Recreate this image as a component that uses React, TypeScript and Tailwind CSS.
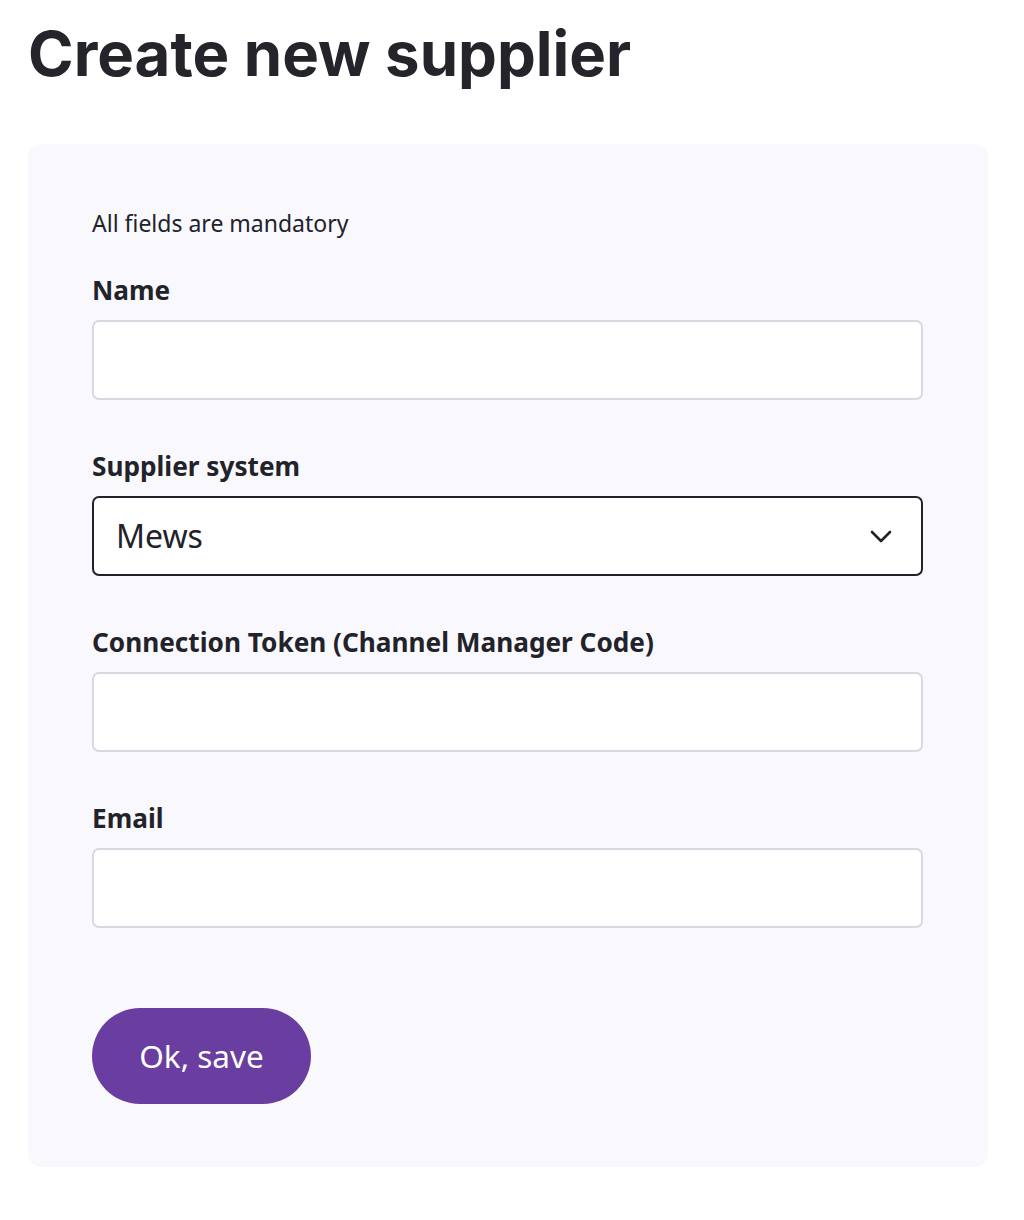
import React from "react";

const font = { fontFamily: '"Noto Sans", "Open Sans", sans-serif' };

function Field({ label, children }: { label: string; children: React.ReactNode }) {
  return (
    <div className="flex flex-col">
      <label className="text-[26.2px] leading-[30px] font-bold text-[#22222a] mb-[15px]">{label}</label>
      {children}
    </div>
  );
}

export default function App() {
  return (
    <div className="min-h-[1220px] bg-white text-[#22222a]" style={font}>
      <div className="pl-[28px] pt-[16px]">
        <h1 className="text-[61.7px] leading-[76px] font-bold text-[#24242a]" style={{ fontFamily: 'Inter, "Noto Sans", sans-serif' }}>
          Create new supplier
        </h1>
        <div className="mt-[52px] w-[960px] rounded-[14px] bg-[#f8f8fd] pl-[64px] pr-[65px] pt-[65px] pb-[63px]">
          <p className="text-[23px] leading-[28px] text-[#22222a] mb-[38px]">All fields are mandatory</p>
          <div className="flex flex-col gap-[51px]">
            <Field label="Name">
              <input className="h-[80px] w-full rounded-[7px] border-2 border-[#d8d8e0] bg-white px-[22px] text-[28px] outline-none" />
            </Field>
            <Field label="Supplier system">
              <div className="relative h-[80px] w-full rounded-[7px] border-2 border-[#22222a] bg-white flex items-center pl-[22px] pr-[28px]">
                <span className="text-[32px] text-[#22222a] flex-1">Mews</span>
                <svg width="24" height="16" viewBox="0 0 24 16" fill="none">
                  <path d="M3 4l9 9 9-9" stroke="#22222a" strokeWidth="2.6" strokeLinecap="round" strokeLinejoin="round" />
                </svg>
              </div>
            </Field>
            <Field label="Connection Token (Channel Manager Code)">
              <input className="h-[80px] w-full rounded-[7px] border-2 border-[#d8d8e0] bg-white px-[22px] text-[28px] outline-none" />
            </Field>
            <Field label="Email">
              <input className="h-[80px] w-full rounded-[7px] border-2 border-[#d8d8e0] bg-white px-[22px] text-[28px] outline-none" />
            </Field>
          </div>
          <button className="mt-[80px] h-[96px] w-[219px] rounded-full bg-[#6a3ea1] text-white text-[31.5px] flex items-center justify-center">
            Ok, save
          </button>
        </div>
      </div>
    </div>
  );
}
